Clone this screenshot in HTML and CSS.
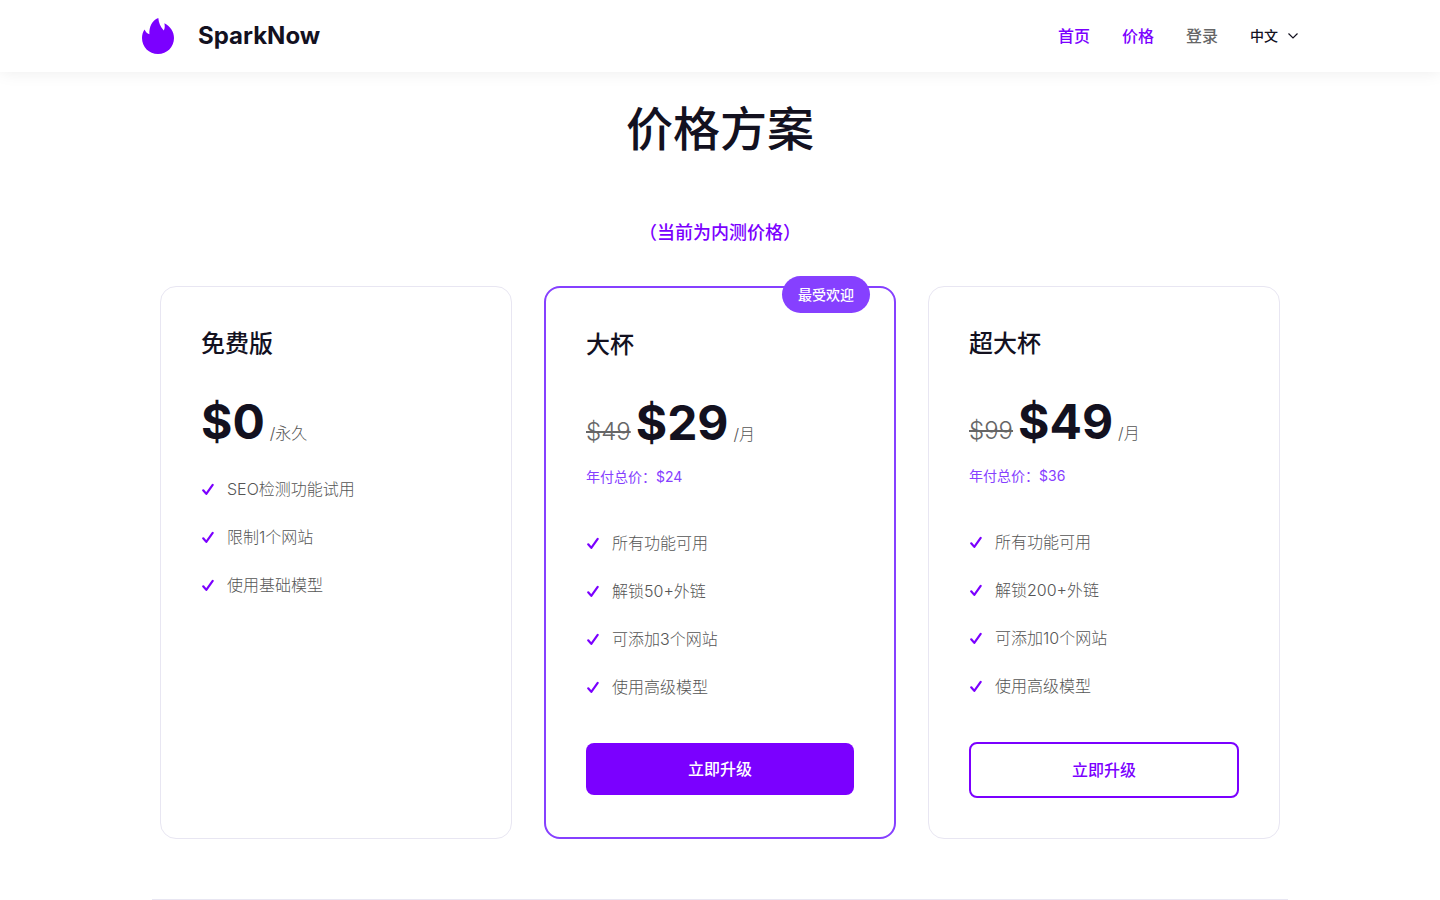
FILE: index.html
```html
<!DOCTYPE html>
<html lang="zh-CN">
<head>
<meta charset="utf-8">
<meta name="viewport" content="width=device-width, initial-scale=1">
<title>SparkNow 价格方案</title>
<link rel="stylesheet" href="styles.css">
</head>
<body>
<svg class="sprite" aria-hidden="true">
  <symbol id="check" viewBox="0 0 14 14"><path d="M2.2 8.3 5.3 11.9 11.7 2.9" fill="none" stroke="currentColor" stroke-width="2.2" stroke-linecap="round" stroke-linejoin="round"/></symbol>
</svg>
<header class="header">
  <div class="header-inner">
    <a class="brand" href="#">
      <svg class="brand-logo" viewBox="0 0 32 36" aria-hidden="true"><path d="M16.3 0C16.7 5 18.5 9 21.8 12.4C23 10.5 22.9 8 22.4 5.3C28.5 8.5 32 14 32 20C32 29 25 36 16 36C7 36 0 29 0 20C0 16.8.8 13.8 2.5 11.4C3.5 13.6 5 15.3 7.4 16.2C7 9 10 2.5 16.3 0Z" fill="currentColor"/></svg>
      <span>SparkNow</span>
    </a>
    <nav class="nav">
      <a class="nav-link" href="#">首页</a>
      <a class="nav-link" href="#">价格</a>
      <a class="nav-link nav-link-muted" href="#">登录</a>
      <button class="language" type="button">中文
        <svg class="chevron" viewBox="0 0 12 8" aria-hidden="true"><path d="M1.5 1.5 6 6 10.5 1.5" fill="none" stroke="currentColor" stroke-width="1.2"/></svg>
      </button>
    </nav>
  </div>
</header>
<main class="page">
  <h1 class="page-title">价格方案</h1>
  <p class="page-note">（当前为内测价格）</p>
  <div class="plans">
    <section class="plan">
      <h2 class="plan-name">免费版</h2>
      <p class="price"><strong class="amount">$0</strong> <span class="period">/永久</span></p>
      <ul class="features">
        <li><svg class="check"><use href="#check"/></svg>SEO检测功能试用</li>
        <li><svg class="check"><use href="#check"/></svg>限制1个网站</li>
        <li><svg class="check"><use href="#check"/></svg>使用基础模型</li>
      </ul>
    </section>
    <section class="plan plan-popular">
      <span class="badge">最受欢迎</span>
      <h2 class="plan-name">大杯</h2>
      <p class="price"><del class="old-price">$49</del> <strong class="amount">$29</strong> <span class="period">/月</span></p>
      <p class="yearly">年付总价：$24</p>
      <ul class="features">
        <li><svg class="check"><use href="#check"/></svg>所有功能可用</li>
        <li><svg class="check"><use href="#check"/></svg>解锁50+外链</li>
        <li><svg class="check"><use href="#check"/></svg>可添加3个网站</li>
        <li><svg class="check"><use href="#check"/></svg>使用高级模型</li>
      </ul>
      <button class="upgrade upgrade-solid" type="button">立即升级</button>
    </section>
    <section class="plan">
      <h2 class="plan-name">超大杯</h2>
      <p class="price"><del class="old-price">$99</del> <strong class="amount">$49</strong> <span class="period">/月</span></p>
      <p class="yearly">年付总价：$36</p>
      <ul class="features">
        <li><svg class="check"><use href="#check"/></svg>所有功能可用</li>
        <li><svg class="check"><use href="#check"/></svg>解锁200+外链</li>
        <li><svg class="check"><use href="#check"/></svg>可添加10个网站</li>
        <li><svg class="check"><use href="#check"/></svg>使用高级模型</li>
      </ul>
      <button class="upgrade upgrade-outline" type="button">立即升级</button>
    </section>
  </div>
  <hr class="divider">
</main>
</body>
</html>
```

FILE: styles.css
```css
* {
  box-sizing: border-box;
}

body {
  margin: 0;
  background: #fff;
  color: #13111f;
  font-family: Inter, "Noto Sans CJK SC", sans-serif;
  font-size: 16px;
  line-height: 24px;
}

h1,
h2,
p,
ul {
  margin: 0;
  padding: 0;
}

a {
  color: inherit;
  text-decoration: none;
}

button {
  font: inherit;
  cursor: pointer;
}

.sprite {
  display: none;
}

.header {
  background: #fff;
  box-shadow: 0 0 16px rgba(0, 0, 0, 0.08);
}

.header-inner {
  display: flex;
  align-items: center;
  justify-content: space-between;
  max-width: 1172px;
  height: 72px;
  margin: 0 auto;
  padding: 0 7px 0 8px;
}

.brand {
  display: flex;
  align-items: center;
  gap: 24px;
  font-size: 24px;
  font-weight: 700;
}

.brand-logo {
  width: 32px;
  height: 36px;
  color: #7b00ff;
}

.nav {
  display: flex;
  align-items: center;
  gap: 32px;
}

.nav-link {
  color: #7b00ff;
  font-weight: 500;
}

.nav-link-muted {
  color: #666;
}

.language {
  display: flex;
  align-items: center;
  gap: 9px;
  padding: 0;
  border: 0;
  background: none;
  color: inherit;
  font-size: 14px;
  font-weight: 500;
}

.chevron {
  width: 12px;
  height: 8px;
}

.page {
  max-width: 1152px;
  margin: 0 auto;
  padding: 25px 8px 0;
}

.page-title {
  font-size: 47px;
  font-weight: 500;
  line-height: 64px;
  text-align: center;
}

.page-note {
  margin-top: 60px;
  color: #7b00ff;
  font-size: 18px;
  font-weight: 500;
  text-align: center;
}

.plans {
  display: grid;
  grid-template-columns: repeat(3, 1fr);
  gap: 32px;
  padding: 41px 8px 60px;
}

.plan {
  position: relative;
  padding: 40px;
  border: 1px solid #e8e6f2;
  border-radius: 16px;
}

.plan-popular {
  border: 2px solid #8640ff;
}

.badge {
  position: absolute;
  top: -12px;
  right: 24px;
  padding: 8px 16px;
  border-radius: 20px;
  background: #8640ff;
  color: #fff;
  font-size: 14px;
  font-weight: 500;
  line-height: 21px;
}

.plan-name {
  font-size: 24px;
  font-weight: 500;
  line-height: 34px;
}

.price {
  display: flex;
  align-items: baseline;
  gap: 5px;
  margin-top: 30px;
  white-space: nowrap;
}

.amount {
  font-size: 48px;
  font-weight: 700;
  line-height: 62px;
}

.old-price {
  color: #666;
  font-size: 24px;
  font-weight: 300;
}

.period {
  color: #555;
  font-weight: 300;
}

.yearly {
  margin-top: 12px;
  color: #8640ff;
  font-size: 14px;
  line-height: 22px;
}

.features {
  display: grid;
  gap: 24px;
  margin-top: 24px;
  color: #555;
  font-weight: 300;
  list-style: none;
}

.yearly + .features {
  margin-top: 43px;
}

.features li {
  display: flex;
  align-items: center;
  gap: 12px;
}

.check {
  width: 14px;
  height: 14px;
  color: #7b00ff;
}

.upgrade {
  display: block;
  width: 100%;
  margin-top: 44px;
  padding: 14px 16px;
  border: 0;
  border-radius: 8px;
  font-weight: 500;
}

.upgrade-solid {
  background: #7b00ff;
  color: #fff;
}

.upgrade-outline {
  border: 2px solid #7b00ff;
  background: #fff;
  color: #7b00ff;
}

.divider {
  height: 1px;
  margin: 0;
  border: 0;
  background: #e8e6f2;
}
```
